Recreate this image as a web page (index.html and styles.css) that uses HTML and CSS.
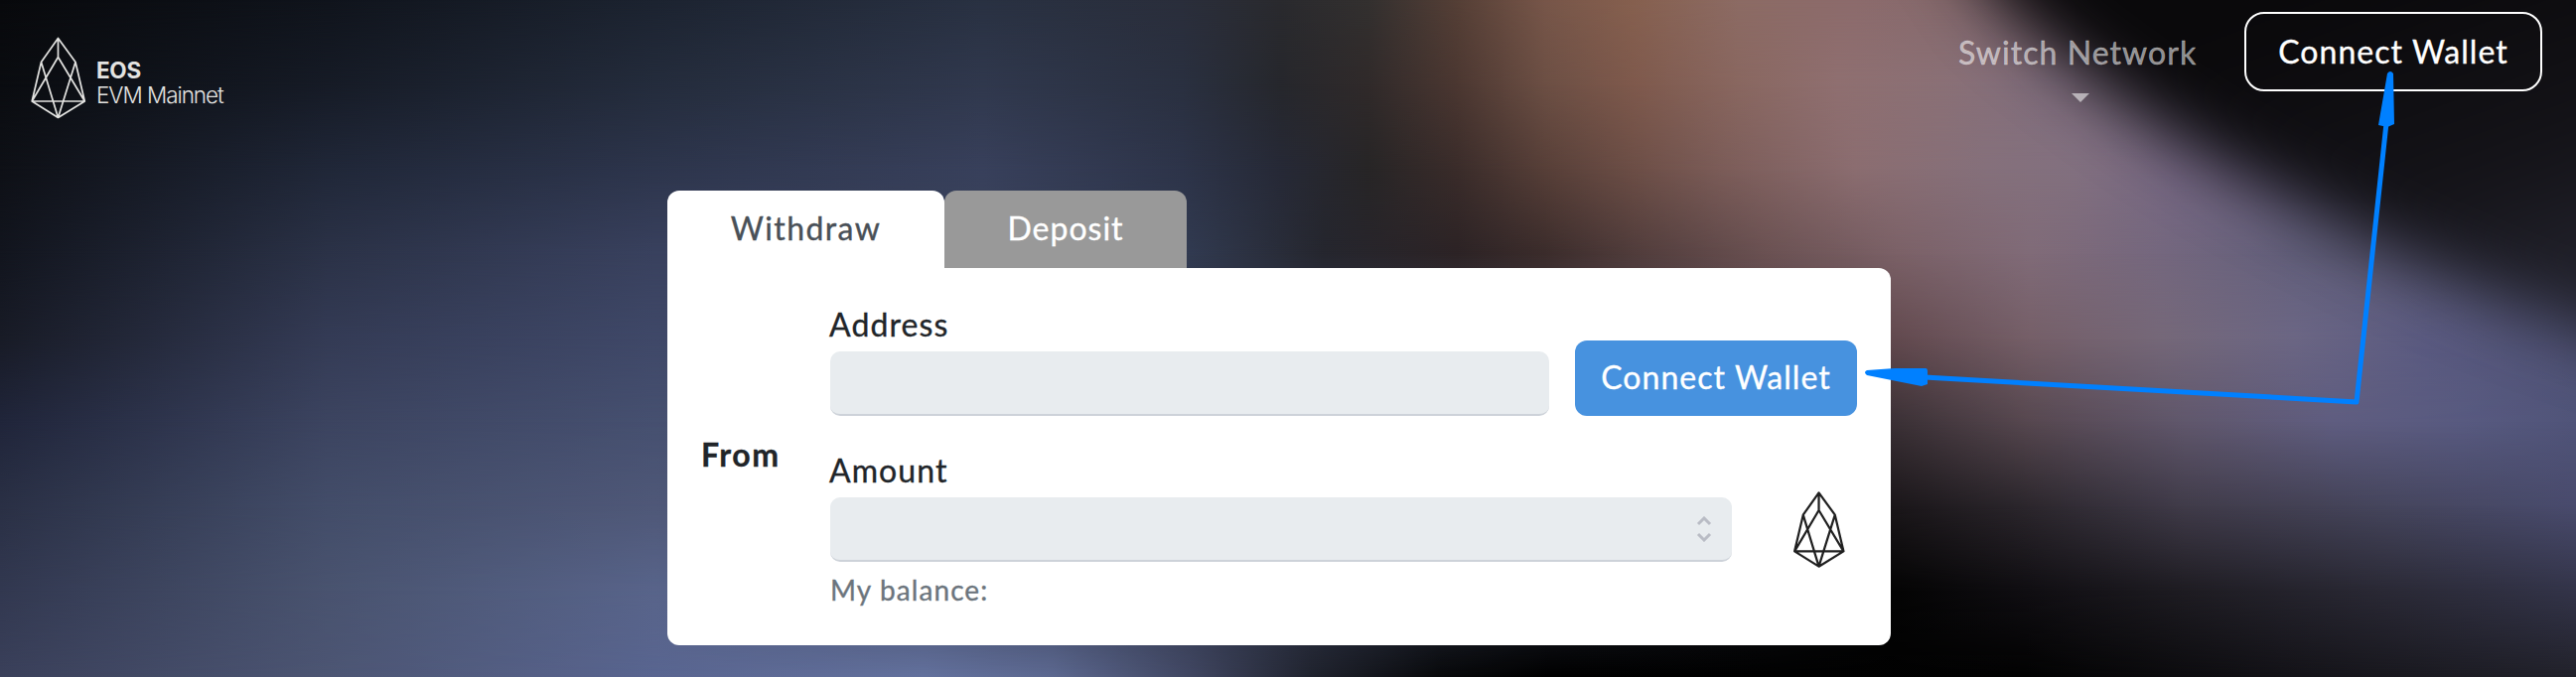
FILE: index.html
```html
<!DOCTYPE html>
<html lang="en">
<head>
<meta charset="utf-8">
<title>EOS EVM Bridge</title>
<link rel="stylesheet" href="styles.css">
</head>
<body>
<svg class="defs" width="0" height="0" aria-hidden="true">
  <symbol id="eos" viewBox="0 0 56 84">
    <path d="M27.5 1.5 10.5 25.5 1.2 65 27.5 81.5 54.3 65 45 25.5ZM27.5 1.5V20.5M1.2 65 27.5 20.5 54.3 65ZM10.5 25.5 27.5 81.5 45 25.5" fill="none" stroke="currentColor" stroke-linejoin="round"/>
  </symbol>
</svg>
<div class="page">
  <div class="backdrop">
    <div class="band b0"></div><div class="band b1"></div><div class="band b2"></div>
    <div class="band b3"></div><div class="band b4"></div><div class="band b5"></div>
    <div class="band b6"></div><div class="band b7"></div><div class="band b8"></div>
    <svg class="corner" viewBox="0 0 2594 682">
      <defs>
        <linearGradient id="night" gradientUnits="userSpaceOnUse" x1="2350" y1="0" x2="2470" y2="330"><stop offset="0" stop-color="#0a090b"/><stop offset=".6" stop-color="#141318"/><stop offset="1" stop-color="#22222c"/></linearGradient>
        <filter id="soft" filterUnits="userSpaceOnUse" x="1600" y="-400" width="1500" height="1200" color-interpolation-filters="sRGB"><feGaussianBlur stdDeviation="33"/></filter>
      </defs>
      <path d="M1880-200 2012 0 2062 45 2115 85 2178 130 2243 170 2325 213 2408 255 2505 297 2594 330 2800 400V-200Z" fill="url(#night)" filter="url(#soft)"/>
    </svg>
  </div>
  <header class="header">
    <div class="brand">
      <svg class="brand-mark"><use href="#eos"/></svg>
      <div class="brand-text"><div class="brand-name">EOS</div><div class="brand-net">EVM Mainnet</div></div>
    </div>
    <nav class="nav">
      <div class="switch"><span class="switch-label">Switch Network</span><span class="caret"></span></div>
      <button class="connect-outline">Connect Wallet</button>
    </nav>
  </header>
  <main class="bridge">
    <div class="tabs">
      <div class="tab tab-active">Withdraw</div>
      <div class="tab tab-idle">Deposit</div>
    </div>
    <section class="card">
      <div class="from">From</div>
      <div class="fields">
        <div class="row">
          <div class="field field-address"><div class="label">Address</div><div class="input"></div></div>
          <button class="connect">Connect Wallet</button>
        </div>
        <div class="row row-amount">
          <div class="field field-amount">
            <div class="label">Amount</div>
            <div class="input">
              <svg class="stepper" viewBox="0 0 16 26"><path d="M2 8 8 2 14 8M2 18 8 24 14 18" fill="none" stroke="#b9bcc5" stroke-width="3"/></svg>
            </div>
          </div>
          <svg class="token"><use href="#eos"/></svg>
        </div>
        <div class="balance">My balance:</div>
      </div>
    </section>
  </main>
  <svg class="arrow" viewBox="0 0 2594 682">
    <path d="M1938 380 2373 405 2403 124" fill="none" stroke="#0080ff" stroke-width="5" stroke-linejoin="round"/>
    <path d="M1880 373 1908 371H1939Q1941 371 1941 374V387L1935 389 1880 378Q1876 375 1880 373ZM2404 74Q2407 70 2410 74L2411 125 2404 128 2395 126Z" fill="#0080ff"/>
  </svg>
</div>
</body>
</html>
```
FILE: styles.css
```css
* { box-sizing: border-box; }
body { margin: 0; background: #000; font-family: Lato, "Open Sans", sans-serif; font-size: 32px; line-height: 40px; color: #212529; }
button { font: inherit; letter-spacing: inherit; cursor: pointer; }
.defs { position: absolute; }
.page { position: relative; width: 2594px; height: 682px; overflow: hidden; isolation: isolate; }

/* Backdrop: horizontal colour bands, each fading in over the one above */
.backdrop { position: absolute; inset: 0; z-index: -1; }
.band { position: absolute; inset: 0; -webkit-mask-image: linear-gradient(to bottom, transparent var(--from), #000 var(--to)); mask-image: linear-gradient(to bottom, transparent var(--from), #000 var(--to)); }
.b0 { -webkit-mask-image: none; mask-image: none; background: linear-gradient(to right, #08090c 0, #10141c 330px, #1c2330 660px, #293142 990px, #2a2e3b 1190px, #2a2a2e 1290px, #33302f 1378px, #553f36 1467px, #775649 1556px, #86604f 1644px, #8c6b64 1751px, #8c6b6c 1867px, #866a6d 1956px, #7c6877 2100px, #5c5a78 2594px); }
.b1 { --from: 0px; --to: 85px; background: linear-gradient(to right, #0a0c10 0, #161b26 330px, #242c3c 660px, #30384d 990px, #2a3040 1190px, #26272c 1290px, #302a2a 1378px, #4b3731 1467px, #6c4f44 1556px, #7e594c 1644px, #896760 1751px, #8f6f70 1850px, #8a7076 1956px, #806e7e 2070px, #6b6480 2300px, #585a7a 2594px); }
.b2 { --from: 85px; --to: 170px; background: linear-gradient(to right, #0e1016 0, #202738 330px, #2d354c 660px, #38405b 990px, #2d3449 1190px, #262936 1290px, #272526 1378px, #3a2c2a 1467px, #573f38 1556px, #6c4e46 1644px, #7b5c58 1733px, #8b6d70 1867px, #85707b 2000px, #82707f 2089px, #766884 2190px, #6a6585 2350px, #565878 2594px); }
.b3 { --from: 170px; --to: 255px; background: linear-gradient(to right, #12151e 0, #2b3247 330px, #39415e 660px, #39435c 1000px, #313a50 1200px, #25262e 1333px, #2c2325 1467px, #3b2c2b 1556px, #503c3b 1644px, #6a5152 1778px, #7b6167 1911px, #806b78 2044px, #74677e 2178px, #63607c 2311px, #565878 2594px); }
.b4 { --from: 255px; --to: 340px; background: linear-gradient(to right, #181b26 0, #343b55 330px, #3f4868 660px, #303549 1300px, #62494e 1904px, #755f68 2044px, #756879 2178px, #6b6684 2311px, #5a5a80 2444px, #505376 2594px); }
.b5 { --from: 340px; --to: 425px; background: linear-gradient(to right, #20253a 0, #3c4460 330px, #465070 660px, #3a3035 1904px, #56474f 2040px, #60576c 2200px, #5f5d80 2350px, #585a80 2480px, #505479 2594px); }
.b6 { --from: 425px; --to: 510px; background: linear-gradient(to right, #2a3045 0, #434d69 330px, #4f5878 660px, #1a1619 1904px, #2b262c 2040px, #403b49 2200px, #45455c 2400px, #494b6d 2594px); }
.b7 { --from: 510px; --to: 595px; background: linear-gradient(to right, #323850 0, #49536f 330px, #58648a 660px, #040404 1904px, #100e12 2040px, #1e1c22 2200px, #2a2935 2400px, #333449 2594px); }
.b8 { --from: 595px; --to: 682px; background: linear-gradient(to right, #3a405a 0, #4c5573 330px, #596590 660px, #63719d 930px, #5c6890 1060px, #404661 1200px, #20232e 1320px, #08090b 1450px, #000 1560px, #020202 2040px, #131217 2300px, #22222b 2594px); }
.corner { position: absolute; inset: 0; width: 2594px; height: 682px; }

.header { height: 192px; display: flex; justify-content: space-between; align-items: flex-start; padding: 12px 34px 0 31px; }
.brand { display: flex; gap: 10px; padding-top: 25px; color: #e3e3e1; }
.brand-mark { width: 56px; height: 84px; stroke-width: 1.7; }
.brand-text { padding-top: 21px; font-family: Inter, sans-serif; font-size: 22.5px; line-height: 25px; }
.brand-name { font-weight: 700; letter-spacing: -.3px; }
.brand-net { font-weight: 300; letter-spacing: -1.05px; }
.nav { display: flex; gap: 50px; letter-spacing: 1.05px; -webkit-text-stroke: .35px currentColor; }
.switch { display: flex; flex-direction: column; align-items: center; padding-top: 21px; color: rgba(255,255,255,.55); }
.switch-label { width: 238px; white-space: nowrap; }
.caret { margin: 21px 0 0 8px; border: 9px solid transparent; border-top-color: rgba(255,255,255,.55); border-bottom: 0; }
.connect-outline { width: 300px; height: 80px; padding: 0; border: 2px solid #fff; border-radius: 20px; background: transparent; color: #fff; }

.bridge { width: 1232px; margin-left: 672px; -webkit-text-stroke: .35px currentColor; }
.tabs { display: flex; height: 78px; letter-spacing: 1px; }
.tab { border-radius: 12px 12px 0 0; text-align: center; padding-top: 18px; }
.tab-active { width: 279px; background: #fff; color: #495057; letter-spacing: 1.4px; }
.tab-idle { width: 244px; background: #999; color: #fff; }
.card { height: 380px; display: grid; grid-template-columns: 128px 1fr; padding: 37px 34px 0 36px; background: #fff; border-radius: 0 12px 12px 12px; }
.from { padding-top: 131px; margin-left: -2px; font-weight: 700; letter-spacing: 1.5px; }
.row { display: flex; justify-content: space-between; align-items: flex-end; }
.row-amount { margin-top: 27px; }
.field-address { width: 724px; }
.field-amount { width: 908px; }
.label { height: 47px; margin-left: -1px; letter-spacing: 1.1px; }
.row-amount .label { height: 55px; padding-top: 8px; }
.input { height: 65px; border-radius: 10px; background: #e8ecef; border-bottom: 2px solid #cdd2d9; display: flex; justify-content: flex-end; align-items: center; padding-right: 20px; }
.stepper { width: 16px; height: 26px; }
.connect { width: 284px; height: 76px; padding: 0 0 2px; border: 0; border-radius: 12px; background: #4792df; color: #fff; letter-spacing: 1.05px; }
.token { width: 52px; height: 78px; margin: 0 12px -7px 0; color: #202020; stroke-width: 2.4; }
.balance { margin-top: 8px; font-size: 28px; color: #6c757d; letter-spacing: 1.1px; }
.arrow { position: absolute; inset: 0; width: 2594px; height: 682px; pointer-events: none; }
```
